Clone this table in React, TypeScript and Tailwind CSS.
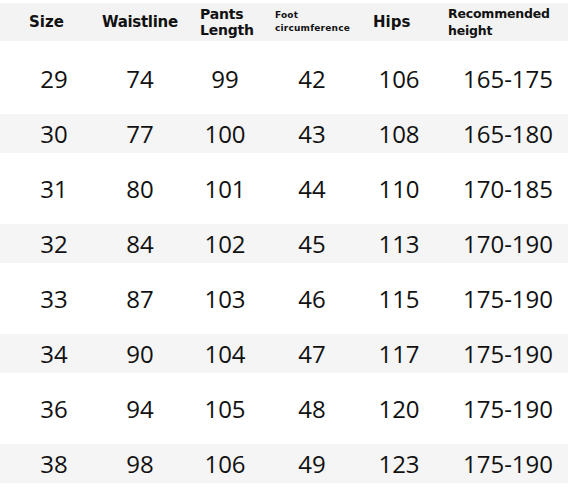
type SizeRow = {
    size: string;
    waist: string;
    length: string;
    foot: string;
    hips: string;
    height: string;
};

const rows: SizeRow[] = [
    { size: "29", waist: "74", length: "99", foot: "42", hips: "106", height: "165-175" },
    { size: "30", waist: "77", length: "100", foot: "43", hips: "108", height: "165-180" },
    { size: "31", waist: "80", length: "101", foot: "44", hips: "110", height: "170-185" },
    { size: "32", waist: "84", length: "102", foot: "45", hips: "113", height: "170-190" },
    { size: "33", waist: "87", length: "103", foot: "46", hips: "115", height: "175-190" },
    { size: "34", waist: "90", length: "104", foot: "47", hips: "117", height: "175-190" },
    { size: "36", waist: "94", length: "105", foot: "48", hips: "120", height: "175-190" },
    { size: "38", waist: "98", length: "106", foot: "49", hips: "123", height: "175-190" },
];

function App() {
    return (
        <div className="w-[568px] h-[495px] bg-white pt-[3px] overflow-hidden text-[#111]">

            {/* header */}
            <div className="h-[38px] w-full flex items-center pl-[29px] bg-[#f3f3f3] font-['DejaVu_Sans',sans-serif] font-bold">
                <div className="w-[73px] text-[15px]">Size</div>
                <div className="w-[98px] text-[15px] tracking-[-0.3px]">Waistline</div>
                <div className="w-[75px] text-[14px] leading-[16px] tracking-[-0.2px]">Pants<br />Length</div>
                <div className="w-[98px] text-[9px] leading-[13px] tracking-[0.2px]">Foot<br />circumference</div>
                <div className="w-[75px] text-[15px]">Hips</div>
                <div className="text-[12.5px] leading-[17px] tracking-[-0.2px]">Recommended<br />height</div>
            </div>

            {/* rows */}
            <div className="mt-[10px] w-full flex flex-col font-['Open_Sans',sans-serif] text-[24px]">
                {rows.map((r, i) => (
                    <div key={r.size} className="h-[55px] py-2">
                        <div className={`h-[39px] w-full grid grid-cols-[108px_64px_106px_68px_106px_112px] items-center text-center ${i % 2 === 1 ? "bg-[#f5f5f5]" : "bg-white"}`}>
                            <span>{r.size}</span>
                            <span>{r.waist}</span>
                            <span>{r.length}</span>
                            <span>{r.foot}</span>
                            <span>{r.hips}</span>
                            <span>{r.height}</span>
                        </div>
                    </div>
                ))}
            </div>

        </div>
    );
}

export default App;
